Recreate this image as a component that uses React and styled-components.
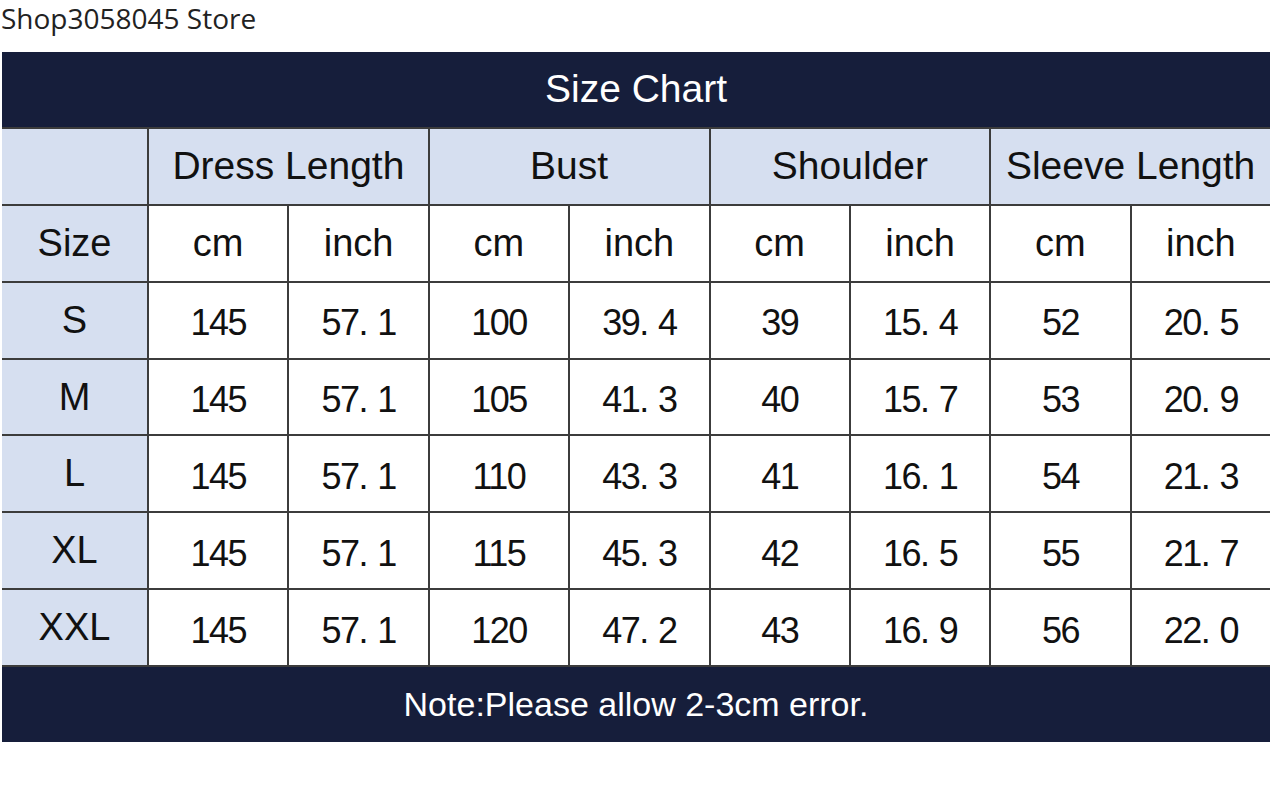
import styled, { createGlobalStyle } from "styled-components";

const GlobalStyle = createGlobalStyle`
  html, body {
    margin: 0;
    padding: 0;
    background: #ffffff;
  }
`;

const Page = styled.div`
  width: 1270px;
  height: 800px;
  background: #ffffff;
  overflow: hidden;
`;

const StoreName = styled.div`
  height: 52px;
  padding-left: 1px;
  box-sizing: border-box;
  font-family: "Open Sans", "Liberation Sans", sans-serif;
  font-size: 28px;
  line-height: 36px;
  color: #222;
`;

const Chart = styled.div`
  margin-left: 2px;
  width: 1268px;
  display: grid;
  grid-template-columns: 145px repeat(8, 1fr);
  grid-template-rows: repeat(9, 74.9px);
  gap: 2px;
  background: #3c3c3c;
`;

const Band = styled.div`
  grid-column: 1 / -1;
  background: #161e3b;
  color: #ffffff;
  display: flex;
  align-items: center;
  justify-content: center;
  font-family: "Liberation Sans", Arial, sans-serif;
  font-size: ${(p) => p.$size}px;
`;

const Cell = styled.div`
  grid-column: span ${(p) => p.$span || 1};
  background: ${(p) => (p.$shade ? "#d6dff0" : "#ffffff")};
  color: #111;
  display: flex;
  align-items: center;
  justify-content: center;
  font-family: "Liberation Sans", Arial, sans-serif;
  font-size: ${(p) => (p.$span ? 39 : 38)}px;
  white-space: nowrap;
`;

const Num = styled.span`
  font-size: 36px;
  letter-spacing: -1.5px;
  padding-top: 6px;
`;

const Dot = styled.span`
  display: inline-block;
  width: 0.52em;
  text-align: left;
`;

const measures = ["Dress Length", "Bust", "Shoulder", "Sleeve Length"];

const rows = [
  ["S", "145", "57.1", "100", "39.4", "39", "15.4", "52", "20.5"],
  ["M", "145", "57.1", "105", "41.3", "40", "15.7", "53", "20.9"],
  ["L", "145", "57.1", "110", "43.3", "41", "16.1", "54", "21.3"],
  ["XL", "145", "57.1", "115", "45.3", "42", "16.5", "55", "21.7"],
  ["XXL", "145", "57.1", "120", "47.2", "43", "16.9", "56", "22.0"],
];

function Value({ text }) {
  const [whole, frac] = text.split(".");
  return (
    <Num>
      {whole}
      {frac !== undefined && (
        <>
          <Dot>.</Dot>
          {frac}
        </>
      )}
    </Num>
  );
}

export default function App() {
  return (
    <Page>
      <GlobalStyle />
      <StoreName>Shop3058045 Store</StoreName>
      <Chart>
        <Band $size={39}>Size Chart</Band>

        <Cell $shade />
        {measures.map((m) => (
          <Cell key={m} $shade $span={2}>
            {m}
          </Cell>
        ))}

        <Cell $shade>Size</Cell>
        {measures.map((m) => [
          <Cell key={m + "cm"}>cm</Cell>,
          <Cell key={m + "in"}>inch</Cell>,
        ])}

        {rows.map((r) => [
          <Cell key={r[0]} $shade>
            {r[0]}
          </Cell>,
          ...r.slice(1).map((v, i) => (
            <Cell key={r[0] + i}>
              <Value text={v} />
            </Cell>
          )),
        ])}

        <Band $size={34}>Note:Please allow 2-3cm error.</Band>
      </Chart>
    </Page>
  );
}
